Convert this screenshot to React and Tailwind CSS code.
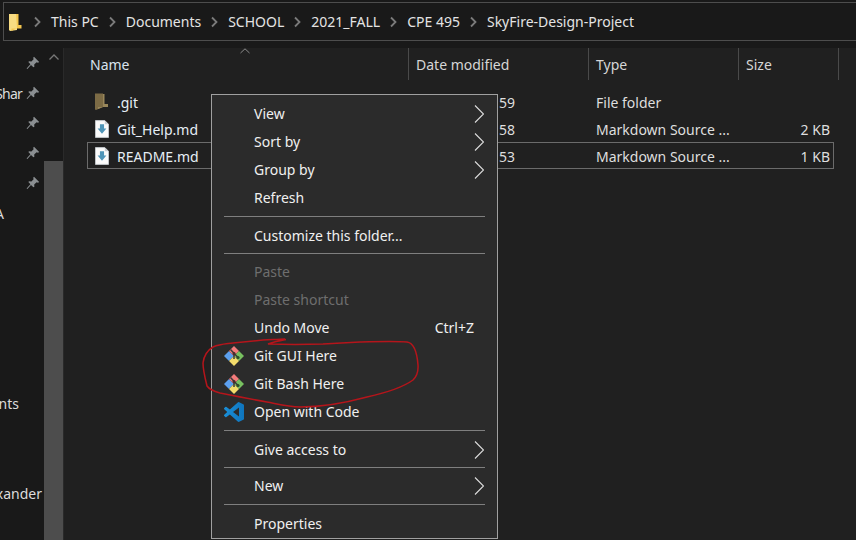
const FONT = "font-['Noto_Sans',sans-serif]";

function Crumb({ children }) {
  return (
    <>
      <svg width="27" height="14" viewBox="0 0 27 14" className="shrink-0">
        <path d="M11 2.5 L15.5 7 L11 11.5" fill="none" stroke="#7b7b7b" strokeWidth="1.8" />
      </svg>
      <span className="text-[14px] text-[#e4e4e4] whitespace-nowrap">{children}</span>
    </>
  );
}

function Pin() {
  return (
    <svg width="14" height="14" viewBox="0 0 14 14" className="shrink-0">
      <path d="M8 0.8 L13.2 6 L12 6.8 L10.6 6.2 L8.2 8.4 L8.4 10.8 L7.4 11.2 L5 8.9 L1.4 13 L0.6 12.6 L4.4 8.2 L2.4 6 L3 5.2 L5.4 5.4 L7.6 3.2 L7.2 1.8 Z" fill="#8b8f92" />
    </svg>
  );
}

function NavRow({ text, pin, pr = "pr-[4px]", mr = "mr-[4px]", cls = "", textCls = "" }) {
  return (
    <div className={`h-[30px] flex items-center justify-end whitespace-nowrap text-[14px] text-[#dcdcdc] ${pr} ${cls}`}>
      {text && <span className={`${mr} ${textCls}`}>{text}</span>}
      {pin && <Pin />}
    </div>
  );
}

function FolderDim() {
  return (
    <svg width="13" height="17" viewBox="0 0 13 17" className="shrink-0">
      <path d="M0 0.5 L8 0.5 L8 14 L1 17 L0 16.5 Z" fill="#7c6b45" />
      <path d="M8 1 L9.5 1 L9.5 11 L13 11 L13 14 L3 14 L3 16 L8 14 Z" fill="#98865a" />
    </svg>
  );
}

function FileIcon() {
  return (
    <svg width="14" height="18" viewBox="0 0 15 19" className="shrink-0">
      <path d="M0.5 0.5 L10.5 0.5 L14.5 4.5 L14.5 18.5 L0.5 18.5 Z" fill="#fbfbfb" stroke="#c4c8cc" />
      <path d="M10.5 0.5 L10.5 4.5 L14.5 4.5 Z" fill="#c9ced3" />
      <path d="M5.3 4.5 L9.7 4.5 L9.7 9 L12.2 9 L7.5 14.5 L2.8 9 L5.3 9 Z" fill="#4f95b8" />
    </svg>
  );
}

function FileRow({ icon, name, date, type, size, selected }) {
  return (
    <div className={`h-[27px] w-[747px] flex items-center text-[14px] text-[#dedede] box-border ${selected ? "border border-[#6b6b6b]" : "border border-transparent"}`}>
      <div className="w-[7px] shrink-0" />
      <div className="w-[14px] shrink-0 flex">{icon}</div>
      <span className="ml-[8px] w-[287px] shrink-0 text-[#e6eef5] pt-[1px]">{name}</span>
      <span className="w-[192px] shrink-0 pl-[95px] pt-[1px]">{date}</span>
      <span className="w-[130px] shrink-0 whitespace-nowrap pt-[1px]">{type}</span>
      <span className="w-[104px] shrink-0 text-right pt-[1px]">{size}</span>
    </div>
  );
}

function HeaderCell({ w, children }) {
  return (
    <div className={`${w} shrink-0 h-[32px] flex items-center pl-[7px] border-r border-[#4a4a4a] text-[14px] text-[#d6d6d6]`}>
      {children}
    </div>
  );
}

function GitIcon() {
  return (
    <svg width="20" height="20" viewBox="1 1 20 20" className="shrink-0">
      <path d="M1 11 L6 6 L11 11 L6 16 Z" fill="#5c9fee" />
      <path d="M6 6 L11 1 L16 6 L11 11 Z" fill="#f27b7b" />
      <path d="M11 11 L16 6 L21 11 L16 16 Z" fill="#78c060" />
      <path d="M6 16 L11 11 L16 16 L11 21 Z" fill="#f3dc6b" />
      <path d="M7.5 4.5 L15 12.5 M11 8.5 L11 14" stroke="#3a3a3a" strokeWidth="1.5" fill="none" />
      <circle cx="15" cy="12.5" r="1.6" fill="#2e4a28" />
      <circle cx="11" cy="8.4" r="1.5" fill="#4a2a2a" />
    </svg>
  );
}

function CodeIcon() {
  return (
    <svg width="20" height="20" viewBox="0 0 24 24" className="shrink-0">
      <defs>
        <linearGradient id="vs" x1="0" y1="0" x2="1" y2="0">
          <stop offset="0" stopColor="#1a8fd8" />
          <stop offset="1" stopColor="#0f75bd" />
        </linearGradient>
      </defs>
      <path
        d="M23.15 2.587L18.21.21a1.494 1.494 0 0 0-1.705.29l-9.46 8.63-4.12-3.128a.999.999 0 0 0-1.276.057L.327 7.261A1 1 0 0 0 .326 8.74L3.899 12 .326 15.26a1 1 0 0 0 .001 1.479L1.65 17.94a.999.999 0 0 0 1.276.057l4.12-3.128 9.46 8.63a1.492 1.492 0 0 0 1.704.29l4.942-2.377A1.5 1.5 0 0 0 24 20.06V3.939a1.5 1.5 0 0 0-.85-1.352zm-5.146 14.861L10.826 12l7.178-5.448v10.896z"
        fill="url(#vs)"
      />
    </svg>
  );
}

function Chevron() {
  return (
    <svg width="10" height="18" viewBox="0 0 10 18" className="shrink-0">
      <path d="M1 0.5 L9.5 9 L1 17.5" fill="none" stroke="#dcdcdc" strokeWidth="1.1" />
    </svg>
  );
}

function Item({ icon, label, right, arrow, disabled }) {
  return (
    <div className={`h-[28px] flex items-center text-[14px] ${disabled ? "text-[#6e6e6e]" : "text-[#f0f0f0]"}`}>
      <div className="w-[30px] shrink-0 flex justify-start">{icon}</div>
      <span className="flex-1 whitespace-nowrap mb-[1px]">{label}</span>
      {right && <span className="mr-[11px] mb-[1px]">{right}</span>}
      {arrow && <div className="mr-[1px] mb-[1px]"><Chevron /></div>}
    </div>
  );
}

function Sep({ t = "mt-[4px]", b = "mb-[5px]" }) {
  return <div className={`h-px bg-[#7f7f7f] ${t} ${b}`} />;
}

export default function App() {
  return (
    <div className={`relative w-[856px] h-[540px] overflow-hidden bg-[#191919] ${FONT}`}>
      <div className="h-[48px] pt-[2px]">
        <div className="ml-[3px] h-[39px] -mr-[10px] border border-[#4d4d4d] bg-[#191919] flex items-center">
          <svg width="13" height="18" viewBox="0 0 13 18" className="ml-[5px] mr-[2px] shrink-0">
            <path d="M0 1 L7.5 1 L8 2 L8 17 L1 18 L0 17 Z" fill="#f8dc82" />
            <path d="M7 1 L9.5 1 L9.5 12 L12.5 12 L12.5 15.5 L2.5 15.5 L2.5 18 L8 15 Z" fill="#f4c64f" />
          </svg>
          <div className="flex items-center">
            <Crumb>This PC</Crumb>
            <Crumb>Documents</Crumb>
            <Crumb>SCHOOL</Crumb>
            <Crumb>2021_FALL</Crumb>
            <Crumb>CPE 495</Crumb>
            <Crumb>SkyFire-Design-Project</Crumb>
          </div>
        </div>
      </div>

      <div className="flex h-[492px]">
        <div className="w-[44px] shrink-0 overflow-hidden">
          <NavRow pin />
          <NavRow pin text="Shar" textCls="tracking-[-0.8px]" />
          <NavRow pin />
          <NavRow pin />
          <NavRow pin />
          <NavRow text="A" pr="pr-[36px]" />
          <NavRow text="nts" pr="pr-[21px]" cls="mt-[160px]" />
          <NavRow text="xander" pr="pr-0" mr="mr-[2px]" cls="mt-[60px]" />
        </div>
        <div className="w-[19px] shrink-0 flex flex-col bg-[#191919]">
          <div className="h-[113px] flex justify-center pt-[6px]">
            <svg width="10" height="7" viewBox="0 0 10 7">
              <path d="M0.5 5.5 L5 1 L9.5 5.5" fill="none" stroke="#777" strokeWidth="1.3" />
            </svg>
          </div>
          <div className="flex-1 bg-[#4d4d4d]" />
        </div>
        <div className="w-[3px] shrink-0 bg-[#202020] border-l border-[#2a2a2a]" />
        <div className="flex-1 bg-[#202020] relative pl-[21px]">
          <div className="flex h-[32px]">
            <HeaderCell w="w-[322px]"><span className="text-[#d9e3ee] -ml-[4px]">Name</span></HeaderCell>
            <HeaderCell w="w-[180px]">Date modified</HeaderCell>
            <HeaderCell w="w-[150px]">Type</HeaderCell>
            <HeaderCell w="w-[100px]">Size</HeaderCell>
          </div>
          <div className="mt-[8px]">
            <FileRow icon={<FolderDim />} name=".git" date="59" type="File folder" />
            <FileRow icon={<FileIcon />} name="Git_Help.md" date="58" type="Markdown Source ..." size="2 KB" />
            <FileRow icon={<FileIcon />} name="README.md" date="53" type="Markdown Source ..." size="1 KB" selected />
          </div>
        </div>
      </div>

      {/* sort caret over the header */}
      <svg width="10" height="6" viewBox="0 0 10 6" className="absolute left-[240px] top-[48px]">
        <path d="M0.5 5 L5 0.8 L9.5 5" fill="none" stroke="#8a8a8a" strokeWidth="1" />
      </svg>

      {/* context menu */}
      <div className="absolute left-[211px] top-[94px] w-[287px] bg-[#2b2b2b] border border-[#a0a0a0] pt-[5px] px-[12px]">
        <Item label="View" arrow />
        <Item label="Sort by" arrow />
        <Item label="Group by" arrow />
        <Item label="Refresh" />
        <Sep />
        <Item label="Customize this folder..." />
        <Sep t="mt-[3px]" b="mb-[4px]" />
        <Item label="Paste" disabled />
        <Item label="Paste shortcut" disabled />
        <Item label="Undo Move" right="Ctrl+Z" />
        <Item label="Git GUI Here" icon={<GitIcon />} />
        <Item label="Git Bash Here" icon={<GitIcon />} />
        <Item label="Open with Code" icon={<CodeIcon />} />
        <Sep />
        <Item label="Give access to" arrow />
        <Sep t="mt-[3px]" b="mb-[4px]" />
        <Item label="New" arrow />
        <Sep />
        <Item label="Properties" />
      </div>

      {/* red hand-drawn annotation */}
      <svg width="856" height="540" viewBox="0 0 856 540" className="absolute left-0 top-0 pointer-events-none">
        <path
          d="M286 339.5 C278 341 273 342 268 344 C285 344.5 305 344.5 323 344 C340 343 350 342.5 360 342 C378 341.5 395 341 407 342 C414 343 417 352 418 365 C418.5 372 416 377 413 380 C402 388 385 393 367 397 C345 403 322 407 300 407 C288 406.5 278 404 267 402 C250 399 235 396 220 393 C213 391 209 389 207 386 C205 378 203 370 203 363 C204 355 208 350 213 347 C220 344 226 344 233 343 C243 342 253 341 263 340 C271 339.6 279 339.4 285 339"
          fill="none"
          stroke="#b5151b"
          strokeWidth="1.5"
        />
      </svg>
    </div>
  );
}
